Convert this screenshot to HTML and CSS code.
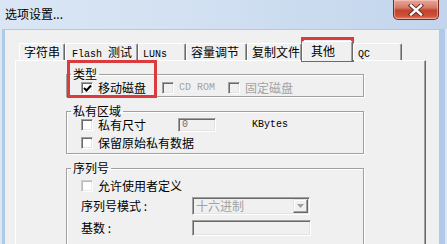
FILE: index.html
```html
<!DOCTYPE html>
<html>
<head>
<meta charset="utf-8">
<link rel="stylesheet" href="styles.css">
</head>
<body>
<div class="win">
  <div class="titlebar">
    <span class="title">选项设置...</span>
    <div class="close">
      <svg width="16" height="12" viewBox="0 0 16 12"><path d="M3 1.5 L13 10.5 M13 1.5 L3 10.5" stroke="#5a2a20" stroke-width="4.2" stroke-linecap="square"/><path d="M3 1.5 L13 10.5 M13 1.5 L3 10.5" stroke="#fff" stroke-width="2.4" stroke-linecap="square"/></svg>
    </div>
  </div>
  <div class="frame">
    <div class="client">
      <div class="tabctl">
        <div class="tabs">
          <div class="tab w1">字符串</div>
          <div class="tab w2"><span class="en">Flash </span>测试</div>
          <div class="tab w3"><span class="en">LUNs</span></div>
          <div class="tab w4">容量调节</div>
          <div class="tab w5">复制文件</div>
          <div class="tab sel">其他</div>
          <div class="tab w7"><span class="en">QC</span></div>
        </div>
        <div class="page">
          <fieldset class="grp g1">
            <legend>类型</legend>
            <div class="row r-type">
              <label class="item i1"><span class="cb on"><svg width="9" height="9" viewBox="0 0 9 9"><path d="M1 4 L3.5 6.5 L8 1.5" fill="none" stroke="#000" stroke-width="2"/></svg></span>移动磁盘</label>
              <label class="item i2 dis"><span class="cb off"></span><span class="en">CD ROM</span></label>
              <label class="item dis"><span class="cb off"></span>固定磁盘</label>
            </div>
          </fieldset>
          <fieldset class="grp g2">
            <legend>私有区域</legend>
            <div class="row r-size">
              <label class="item i-size"><span class="cb"></span>私有尺寸</label>
              <span class="edit e-size"><span class="en">0</span></span>
              <span class="en unit">KBytes</span>
            </div>
            <div class="row r-keep">
              <label class="item"><span class="cb"></span>保留原始私有数据</label>
            </div>
          </fieldset>
          <fieldset class="grp g3">
            <legend>序列号</legend>
            <div class="row r-allow">
              <label class="item"><span class="cb light"></span>允许使用者定义</label>
            </div>
            <div class="row r-mode">
              <span class="lbl">序列号模式 :</span>
              <span class="combo"><span class="ctext">十六进制</span><span class="cbtn"><svg width="7" height="4" viewBox="0 0 7 4"><path d="M0 0 H7 L3.5 4 Z" fill="#a0a0a0"/></svg></span></span>
            </div>
            <div class="row r-base">
              <span class="lbl">基数 :</span>
              <span class="edit e-base"></span>
            </div>
          </fieldset>
        </div>
      </div>
    </div>
  </div>
  <div class="hl hl1"></div>
  <div class="hl hl2"></div>
</div>
</body>
</html>
```

FILE: styles.css
```css
html, body {
  margin: 0;
  padding: 0;
}
body {
  width: 447px;
  height: 244px;
  overflow: hidden;
  font: 12px/14px "Noto Sans CJK SC", sans-serif;
  color: #000;
}
.en {
  font-family: "Liberation Mono", monospace;
  font-size: 10px;
}
.win {
  position: relative;
  width: 447px;
  height: 244px;
  overflow: hidden;
  background: #dbe7f5;
  display: flex;
  flex-direction: column;
}
.titlebar {
  height: 29px;
  flex: none;
  display: flex;
  align-items: flex-start;
  background: linear-gradient(to right, #dae6f4 0%, #d3e1f2 40%, #c2d5ec 100%);
}
.title {
  margin: 7px 0 0 5px;
  font-size: 12px;
  line-height: 14px;
}
.close {
  margin-left: auto;
  margin-right: 8px;
  width: 46px;
  height: 20px;
  box-sizing: border-box;
  border: 1px solid #7a2a24;
  border-top: none;
  border-radius: 0 0 5px 5px;
  background: linear-gradient(to bottom, #e9a99c 0%, #d57a68 40%, #c1432e 55%, #d1513a 85%, #e5826a 100%);
  box-shadow: inset 0 0 0 1px rgba(255,220,210,0.45);
  display: flex;
  align-items: center;
  justify-content: center;
}
.frame {
  flex: 1;
  min-height: 0;
  display: flex;
  padding: 0 2px 0 2px;
}
.client {
  flex: 1;
  background: #f0f0f0;
  border-left: 3px solid #b1c9e8;
  border-right: 6px solid #b1c9e8;
  border-top: 1px solid #b8c8da;
  padding-top: 11px;
}
.tabctl {
  margin-left: 10px;
  width: 411px;
  display: flex;
  flex-direction: column;
  height: 100%;
}
.tabs {
  display: flex;
  align-items: flex-end;
  height: 19px;
  padding-left: 4px;
  position: relative;
  z-index: 1;
}
.tab {
  box-sizing: border-box;
  height: 17px;
  padding: 1px 0 0 4px;
  border-top: 1px solid #fff;
  border-left: 1px solid #fff;
  border-right: 1px solid #696969;
  border-radius: 2px 2px 0 0;
  box-shadow: inset -1px 0 0 #a0a0a0;
  white-space: nowrap;
  line-height: 14px;
}
.w1 { width: 46px; }
.w2 { width: 73px; padding-left: 6px; }
.w3 { width: 48px; }
.w4 { width: 61px; }
.w5 { width: 55px; }
.sel {
  width: 51px;
  height: 20px;
  margin-bottom: -1px;
  padding: 2px 0 0 8px;
  background: #f0f0f0;
}
.w7 { width: 49px; }
.page {
  flex: 1;
  box-sizing: border-box;
  border-top: 1px solid #fff;
  border-left: 1px solid #fff;
  border-right: 1px solid #696969;
  box-shadow: inset -1px 0 0 #a0a0a0;
  padding: 6px 0 0 50px;
}
.grp {
  width: 298px;
  box-sizing: border-box;
  margin: 0;
  padding: 0 0 0 14px;
  border: 1px solid #a0a0a0;
  box-shadow: inset 1px 1px 0 #fff, 1px 1px 0 #fff;
  min-width: 0;
}
.grp legend {
  padding: 0 2px;
  margin-left: -10px;
  line-height: 14px;
  height: 14px;
}
.g1 { height: 30px; }
.g2 { margin-top: 7px; height: 50px; }
.g3 { margin-top: 7px; height: 100px; }
.row {
  display: flex;
  align-items: center;
  height: 14px;
}
.item {
  display: flex;
  align-items: center;
  white-space: nowrap;
}
.cb {
  box-sizing: border-box;
  width: 12px;
  height: 12px;
  margin-right: 5px;
  background: #fff;
  border-top: 1px solid #a0a0a0;
  border-left: 1px solid #a0a0a0;
  border-right: 1px solid #fff;
  border-bottom: 1px solid #fff;
  box-shadow: inset 1px 1px 0 #696969, inset -1px -1px 0 #e3e3e3;
  display: flex;
  align-items: center;
  justify-content: center;
}
.cb.off {
  background: #f0f0f0;
}
.cb.light {
  box-shadow: inset 1px 1px 0 #b8b8b8, inset -1px -1px 0 #ececec;
  border-top-color: #d0d0d0;
  border-left-color: #d0d0d0;
}
.dis {
  color: #a3a3a3;
}
.r-type { height: 14px; }
.i1 { width: 81px; }
.i2 { width: 66px; }
.i-size { width: 97px; }
.r-size { height: 14px; }
.edit {
  box-sizing: border-box;
  display: flex;
  align-items: center;
  background: #f0f0f0;
  border-top: 1px solid #a0a0a0;
  border-left: 1px solid #a0a0a0;
  border-right: 1px solid #fff;
  border-bottom: 1px solid #fff;
  box-shadow: inset 1px 1px 0 #696969, inset -1px -1px 0 #e3e3e3;
}
.e-size {
  width: 38px;
  height: 14px;
  padding-left: 3px;
  color: #6d6d6d;
}
.unit {
  margin-left: 36px;
}
.r-keep { margin-top: 4px; height: 14px; }
.r-allow { margin-top: 4px; height: 14px; }
.lbl {
  width: 111px;
  white-space: nowrap;
}
.r-mode { margin-top: 4px; height: 18px; }
.combo {
  box-sizing: border-box;
  width: 118px;
  height: 18px;
  display: flex;
  align-items: center;
  background: #f0f0f0;
  border-top: 1px solid #a0a0a0;
  border-left: 1px solid #a0a0a0;
  border-right: 1px solid #fff;
  border-bottom: 1px solid #fff;
  box-shadow: inset 1px 1px 0 #696969, inset -1px -1px 0 #e3e3e3;
  padding: 1px;
}
.ctext {
  flex: 1;
  color: #a3a3a3;
  padding-left: 2px;
}
.cbtn {
  box-sizing: border-box;
  width: 15px;
  height: 14px;
  border-top: 1px solid #e3e3e3;
  border-left: 1px solid #e3e3e3;
  border-right: 1px solid #696969;
  border-bottom: 1px solid #696969;
  box-shadow: inset -1px -1px 0 #a0a0a0, inset 1px 1px 0 #fff;
  display: flex;
  align-items: center;
  justify-content: center;
}
.r-base { margin-top: 5px; height: 16px; }
.e-base {
  width: 119px;
  height: 16px;
}
.hl {
  position: absolute;
  box-sizing: border-box;
  border: 3px solid #dc3b3e;
}
.hl1 {
  left: 67px;
  top: 60px;
  width: 90px;
  height: 38px;
}
.hl2 {
  left: 301px;
  top: 37px;
  width: 53px;
  height: 25px;
}
```
